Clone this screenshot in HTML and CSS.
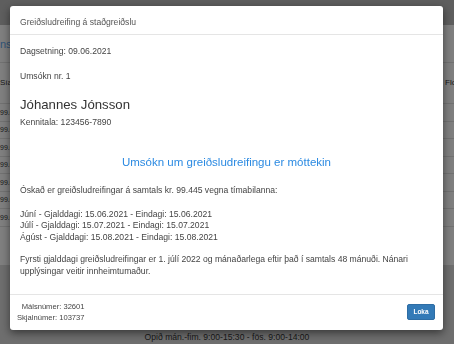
FILE: index.html
```html
<!DOCTYPE html>
<html lang="is">
<head>
  <meta charset="UTF-8" />
  <meta name="viewport" content="width=device-width, initial-scale=1.0"/>
  <title>Greiðsludreifing á staðgreiðslu</title>
  <link rel="stylesheet" href="styles.css">
</head>
<body>
  <div class="page">
    <div class="topbar"></div>

    <main class="content">
      <h2 class="page-title">ns</h2>
      <div class="list">
        <div class="list-row list-head">
          <span class="cell">Sía</span>
          <span class="cell cell-right">Flokkur</span>
        </div>
        <div class="list-row"><span class="cell">99.000 kr.</span></div>
        <div class="list-row"><span class="cell">99.000 kr.</span></div>
        <div class="list-row"><span class="cell">99.000 kr.</span></div>
        <div class="list-row"><span class="cell">99.000 kr.</span></div>
        <div class="list-row"><span class="cell">99.000 kr.</span></div>
        <div class="list-row"><span class="cell">99.000 kr.</span></div>
        <div class="list-row"><span class="cell">99.000 kr.</span></div>
      </div>
    </main>

    <footer class="site-footer">
      <p>Opið mán.-fim. 9:00-15:30 - fös. 9:00-14:00</p>
    </footer>
  </div>

  <div class="backdrop"></div>

  <div class="modal">
    <div class="modal-header">
      <h4 class="modal-title">Greiðsludreifing á staðgreiðslu</h4>
    </div>

    <div class="modal-body">
      <p class="date">Dagsetning: 09.06.2021</p>
      <p class="app-nr">Umsókn nr. 1</p>
      <h3 class="name">Jóhannes Jónsson</h3>
      <p class="kt">Kennitala: 123456-7890</p>

      <h4 class="status">Umsókn um greiðsludreifingu er móttekin</h4>

      <p class="summary">Óskað er greiðsludreifingar á samtals kr. 99.445 vegna tímabilanna:</p>
      <p class="periods">
        Júní - Gjalddagi: 15.06.2021 - Eindagi: 15.06.2021<br>
        Júlí - Gjalddagi: 15.07.2021 - Eindagi: 15.07.2021<br>
        Ágúst - Gjalddagi: 15.08.2021 - Eindagi: 15.08.2021
      </p>
      <p class="note">Fyrsti gjalddagi greiðsludreifingar er 1. júlí 2022 og mánaðarlega eftir það í samtals 48 mánuði. Nánari upplýsingar veitir innheimtumaður.</p>
    </div>

    <div class="modal-footer">
      <div class="case-numbers">
        Málsnúmer: 32601<br>
        Skjalnúmer: 103737
      </div>
      <button class="btn-close">Loka</button>
    </div>
  </div>
</body>
</html>
```

FILE: styles.css
```css
:root {
  --primary: #337ab7;
  --heading: #2b8ae2;
  --text: #444;
  --line: #e5e5e5;
}

* {
  margin: 0;
  padding: 0;
  box-sizing: border-box;
}

html,
body {
  width: 454px;
  height: 344px;
  overflow: hidden;
}

body {
  font-family: "Liberation Sans", Arial, sans-serif;
  font-size: 8.6px;
  line-height: 11.5px;
  color: var(--text);
  background: #fff;
}

/* page behind the dialog */

.page {
  display: flex;
  flex-direction: column;
  height: 344px;
}

.topbar {
  height: 25px;
  background: #bcbcbc;
}

.content {
  flex: 1;
  padding-top: 12px;
}

.page-title {
  font-size: 11px;
  line-height: 14px;
  font-weight: normal;
  color: #5fa8f0;
  padding-bottom: 11px;
  border-bottom: 1px solid #e2e2e2;
}

.list-row {
  display: flex;
  justify-content: space-between;
  align-items: center;
  height: 17.5px;
  font-size: 7px;
  color: #333;
  border-bottom: 1px solid #e2e2e2;
}

.list-head {
  height: 41px;
  font-size: 8px;
}

.cell-right {
  width: 9px;
  white-space: nowrap;
}

.site-footer {
  height: 79px;
  padding-top: 67px;
  background: #dcdcdc;
  text-align: center;
  color: #333;
}

.backdrop {
  position: fixed;
  inset: 0;
  background: rgba(0, 0, 0, 0.5);
}

/* dialog */

.modal {
  position: fixed;
  top: 6px;
  left: 10px;
  width: 433px;
  background: #fff;
  border-radius: 3px;
  box-shadow: 0 3px 9px rgba(0, 0, 0, 0.5);
}

.modal-header {
  padding: 10.5px 10px 6px;
  border-bottom: 1px solid var(--line);
}

.modal-title {
  font-size: 8.6px;
  font-weight: normal;
  color: #555;
}

.modal-body {
  padding: 10.5px 10px 17px;
}

.date {
  margin-bottom: 13.5px;
}

.app-nr {
  margin-bottom: 15px;
}

.name {
  font-size: 13.2px;
  line-height: 15px;
  font-weight: normal;
  color: #333;
  margin-bottom: 5px;
}

.kt {
  margin-bottom: 26px;
}

.status {
  font-size: 11.5px;
  line-height: 14px;
  font-weight: normal;
  text-align: center;
  color: var(--heading);
  margin-bottom: 16.5px;
}

.summary {
  margin-bottom: 12px;
}

.periods {
  margin-bottom: 11px;
}

.modal-footer {
  display: flex;
  justify-content: space-between;
  align-items: center;
  padding: 5.8px 8px 7.2px 7px;
  border-top: 1px solid var(--line);
}

.case-numbers {
  font-size: 7.6px;
  line-height: 11px;
  text-align: right;
  color: #444;
}

.btn-close {
  width: 28px;
  height: 16px;
  background: var(--primary);
  border: 1px solid #2e6da4;
  border-radius: 2px;
  color: #fff;
  font-family: "Liberation Sans", Arial, sans-serif;
  font-size: 6.5px;
  font-weight: bold;
  cursor: pointer;
}
```
